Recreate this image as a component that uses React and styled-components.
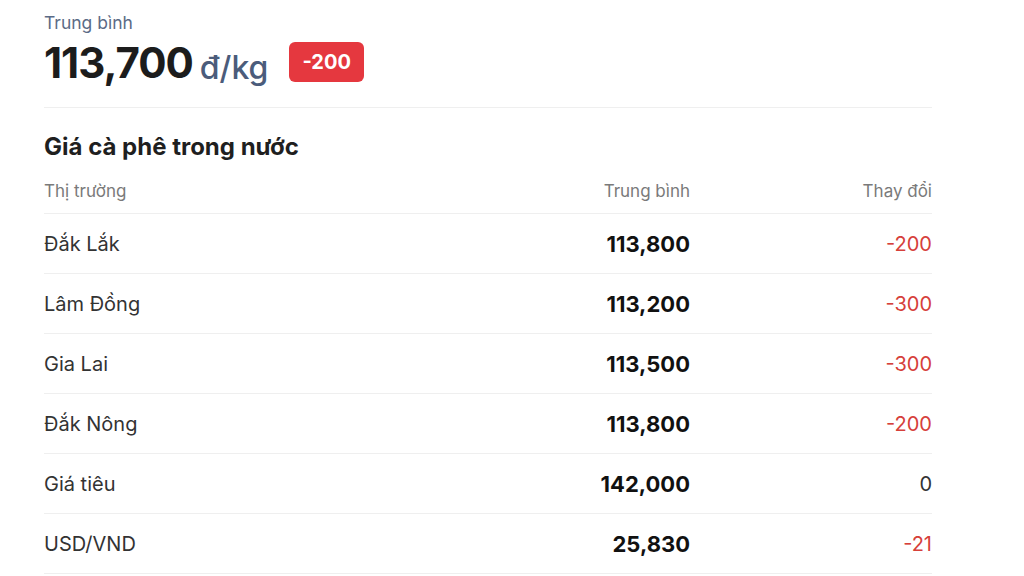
import React from "react";
import styled, { createGlobalStyle } from "styled-components";

const Global = createGlobalStyle`
  body {
    margin: 0;
    background: #ffffff;
    font-family: Inter, "Noto Sans", sans-serif;
    color: #1f1f1f;
  }
`;

const Page = styled.div`
  width: 888px;
  padding: 13px 0 0 44px;
`;

const Summary = styled.section`
  padding-bottom: 18px;
  border-bottom: 1px solid #efefef;
`;

const Label = styled.div`
  font-size: 17.5px;
  line-height: 20px;
  color: #5b6b86;
`;

const PriceLine = styled.div`
  display: flex;
  align-items: center;
  margin-top: 4px;
`;

const Price = styled.span`
  font-size: 42px;
  font-weight: 700;
  letter-spacing: -1px;
  line-height: 52px;
  color: #1c1c1c;
`;

const Unit = styled.span`
  font-size: 32px;
  font-weight: 500;
  color: #4b5c7b;
  margin-left: 7px;
  margin-top: 8px;
`;

const Badge = styled.span`
  margin-left: 21px;
  margin-bottom: 2px;
  background: #e5383f;
  color: #fff;
  font-size: 20px;
  font-weight: 700;
  border-radius: 6px;
  padding: 8px 13px;
  line-height: 24px;
`;

const Heading = styled.h2`
  margin: 24px 0 6px;
  font-size: 24px;
  line-height: 30px;
  font-weight: 700;
  color: #1f1f1f;
`;

const Row = styled.div`
  display: grid;
  grid-template-columns: 1fr 200px 242px;
  align-items: center;
  height: ${(p) => (p.$head ? "45px" : "59px")};
  border-bottom: 1px solid #efefef;
  font-size: ${(p) => (p.$head ? "17px" : "20px")};
  color: ${(p) => (p.$head ? "#7a7a7a" : "#333")};
`;

const Market = styled.div``;

const Avg = styled.div`
  text-align: right;
  font-size: ${(p) => (p.$head ? "17px" : "22px")};
  font-weight: ${(p) => (p.$head ? 400 : 700)};
  color: ${(p) => (p.$head ? "#7a7a7a" : "#111")};
`;

const Change = styled.div`
  text-align: right;
  color: ${(p) => (p.$head ? "#7a7a7a" : p.$neg ? "#d6403a" : "#333")};
`;

const rows = [
  ["Đắk Lắk", "113,800", "-200"],
  ["Lâm Đồng", "113,200", "-300"],
  ["Gia Lai", "113,500", "-300"],
  ["Đắk Nông", "113,800", "-200"],
  ["Giá tiêu", "142,000", "0"],
  ["USD/VND", "25,830", "-21"],
];

export default function App() {
  return (
    <Page>
      <Global />
      <Summary>
        <Label>Trung bình</Label>
        <PriceLine>
          <Price>113,700</Price>
          <Unit>đ/kg</Unit>
          <Badge>-200</Badge>
        </PriceLine>
      </Summary>
      <Heading>Giá cà phê trong nước</Heading>
      <Row $head>
        <Market>Thị trường</Market>
        <Avg $head>Trung bình</Avg>
        <Change $head>Thay đổi</Change>
      </Row>
      {rows.map(([m, a, c]) => (
        <Row key={m}>
          <Market>{m}</Market>
          <Avg>{a}</Avg>
          <Change $neg={c.startsWith("-")}>{c}</Change>
        </Row>
      ))}
    </Page>
  );
}
